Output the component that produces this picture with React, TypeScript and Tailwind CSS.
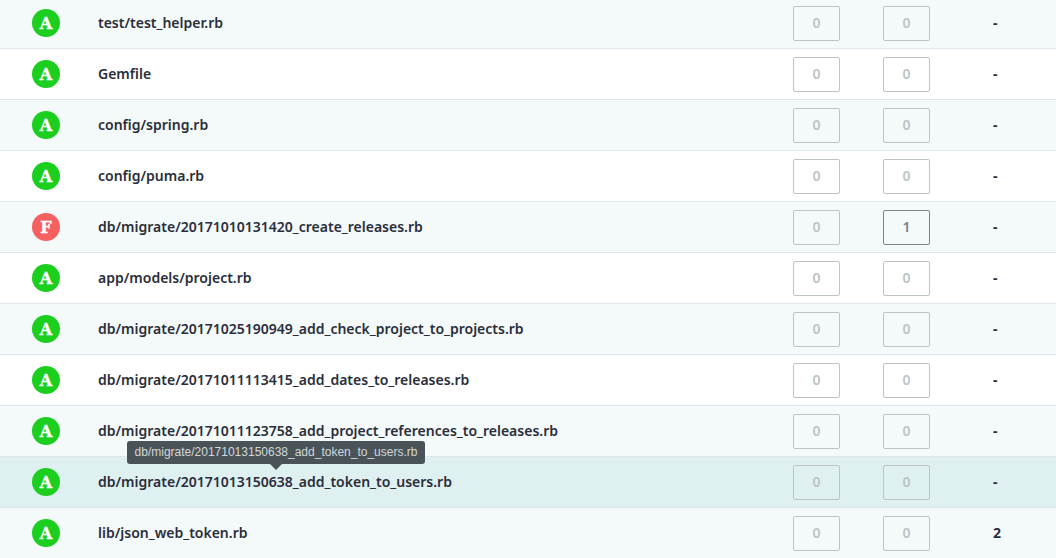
const files = [
  { name: 'test/test_helper.rb', status: 'A', a: 0, b: 0, c: '-' },
  { name: 'Gemfile', status: 'A', a: 0, b: 0, c: '-' },
  { name: 'config/spring.rb', status: 'A', a: 0, b: 0, c: '-' },
  { name: 'config/puma.rb', status: 'A', a: 0, b: 0, c: '-' },
  { name: 'db/migrate/20171010131420_create_releases.rb', status: 'F', a: 0, b: 1, c: '-' },
  { name: 'app/models/project.rb', status: 'A', a: 0, b: 0, c: '-' },
  { name: 'db/migrate/20171025190949_add_check_project_to_projects.rb', status: 'A', a: 0, b: 0, c: '-' },
  { name: 'db/migrate/20171011113415_add_dates_to_releases.rb', status: 'A', a: 0, b: 0, c: '-' },
  { name: 'db/migrate/20171011123758_add_project_references_to_releases.rb', status: 'A', a: 0, b: 0, c: '-' },
  { name: 'db/migrate/20171013150638_add_token_to_users.rb', status: 'A', a: 0, b: 0, c: '-', hover: true },
  { name: 'lib/json_web_token.rb', status: 'A', a: 0, b: 0, c: '2' },
];

function CountBox({ value }: { value: number }) {
  return (
    <div
      className={`flex h-[35px] w-[47px] items-center justify-center rounded-[2px] border pb-[2px] text-[14px] font-semibold ${
        value > 0 ? 'border-[#7a8589] text-[#7a8589]' : 'border-[#bcc4c6] text-[#bcc4c6]'
      }`}
    >
      {value}
    </div>
  );
}

export default function App() {
  return (
    <div className="h-[558px] w-[1056px] overflow-hidden bg-white font-['Noto_Sans',sans-serif]">
      <div className="-mt-[2px]">
        {files.map((file, i) => (
          <div
            key={file.name}
            className={`relative grid h-[51px] grid-cols-[98px_695px_90px_110px_63px] items-center border-b border-[#dfe8ee] ${
              file.hover ? 'bg-[#dff0f0]' : i % 2 === 0 ? 'bg-[#f4f9fa]' : 'bg-white'
            }`}
          >
            <div className="pl-[32px]">
              <div
                className={`flex h-[28px] w-[28px] items-center justify-center rounded-full pt-[1px] font-['DejaVu_Serif',serif] text-[16px] leading-none font-bold text-white [-webkit-text-stroke:0.4px_white] ${
                  file.status === 'F' ? 'bg-[#f56161]' : 'bg-[#1ccf1f]'
                }`}
              >
                {file.status}
              </div>
            </div>
            <div className="text-[14px] leading-5 font-semibold text-[#2a2e3b]">{file.name}</div>
            <CountBox value={file.a} />
            <CountBox value={file.b} />
            <div className="pb-[2px] text-[14px] font-bold text-[#2a2e3b]">{file.c}</div>
            {file.hover && (
              <div className="absolute top-[-16px] left-[127px] h-[23px] w-[298px] rounded-[3px] bg-[#4a5358] text-center font-['Liberation_Sans',sans-serif] text-[12px] leading-[23px] text-[#d3d7d9]">
                {file.name}
                <div className="absolute top-[23px] left-[143px] h-0 w-0 border-x-[6px] border-t-[6px] border-x-transparent border-t-[#4a5358]" />
              </div>
            )}
          </div>
        ))}
      </div>
    </div>
  );
}
